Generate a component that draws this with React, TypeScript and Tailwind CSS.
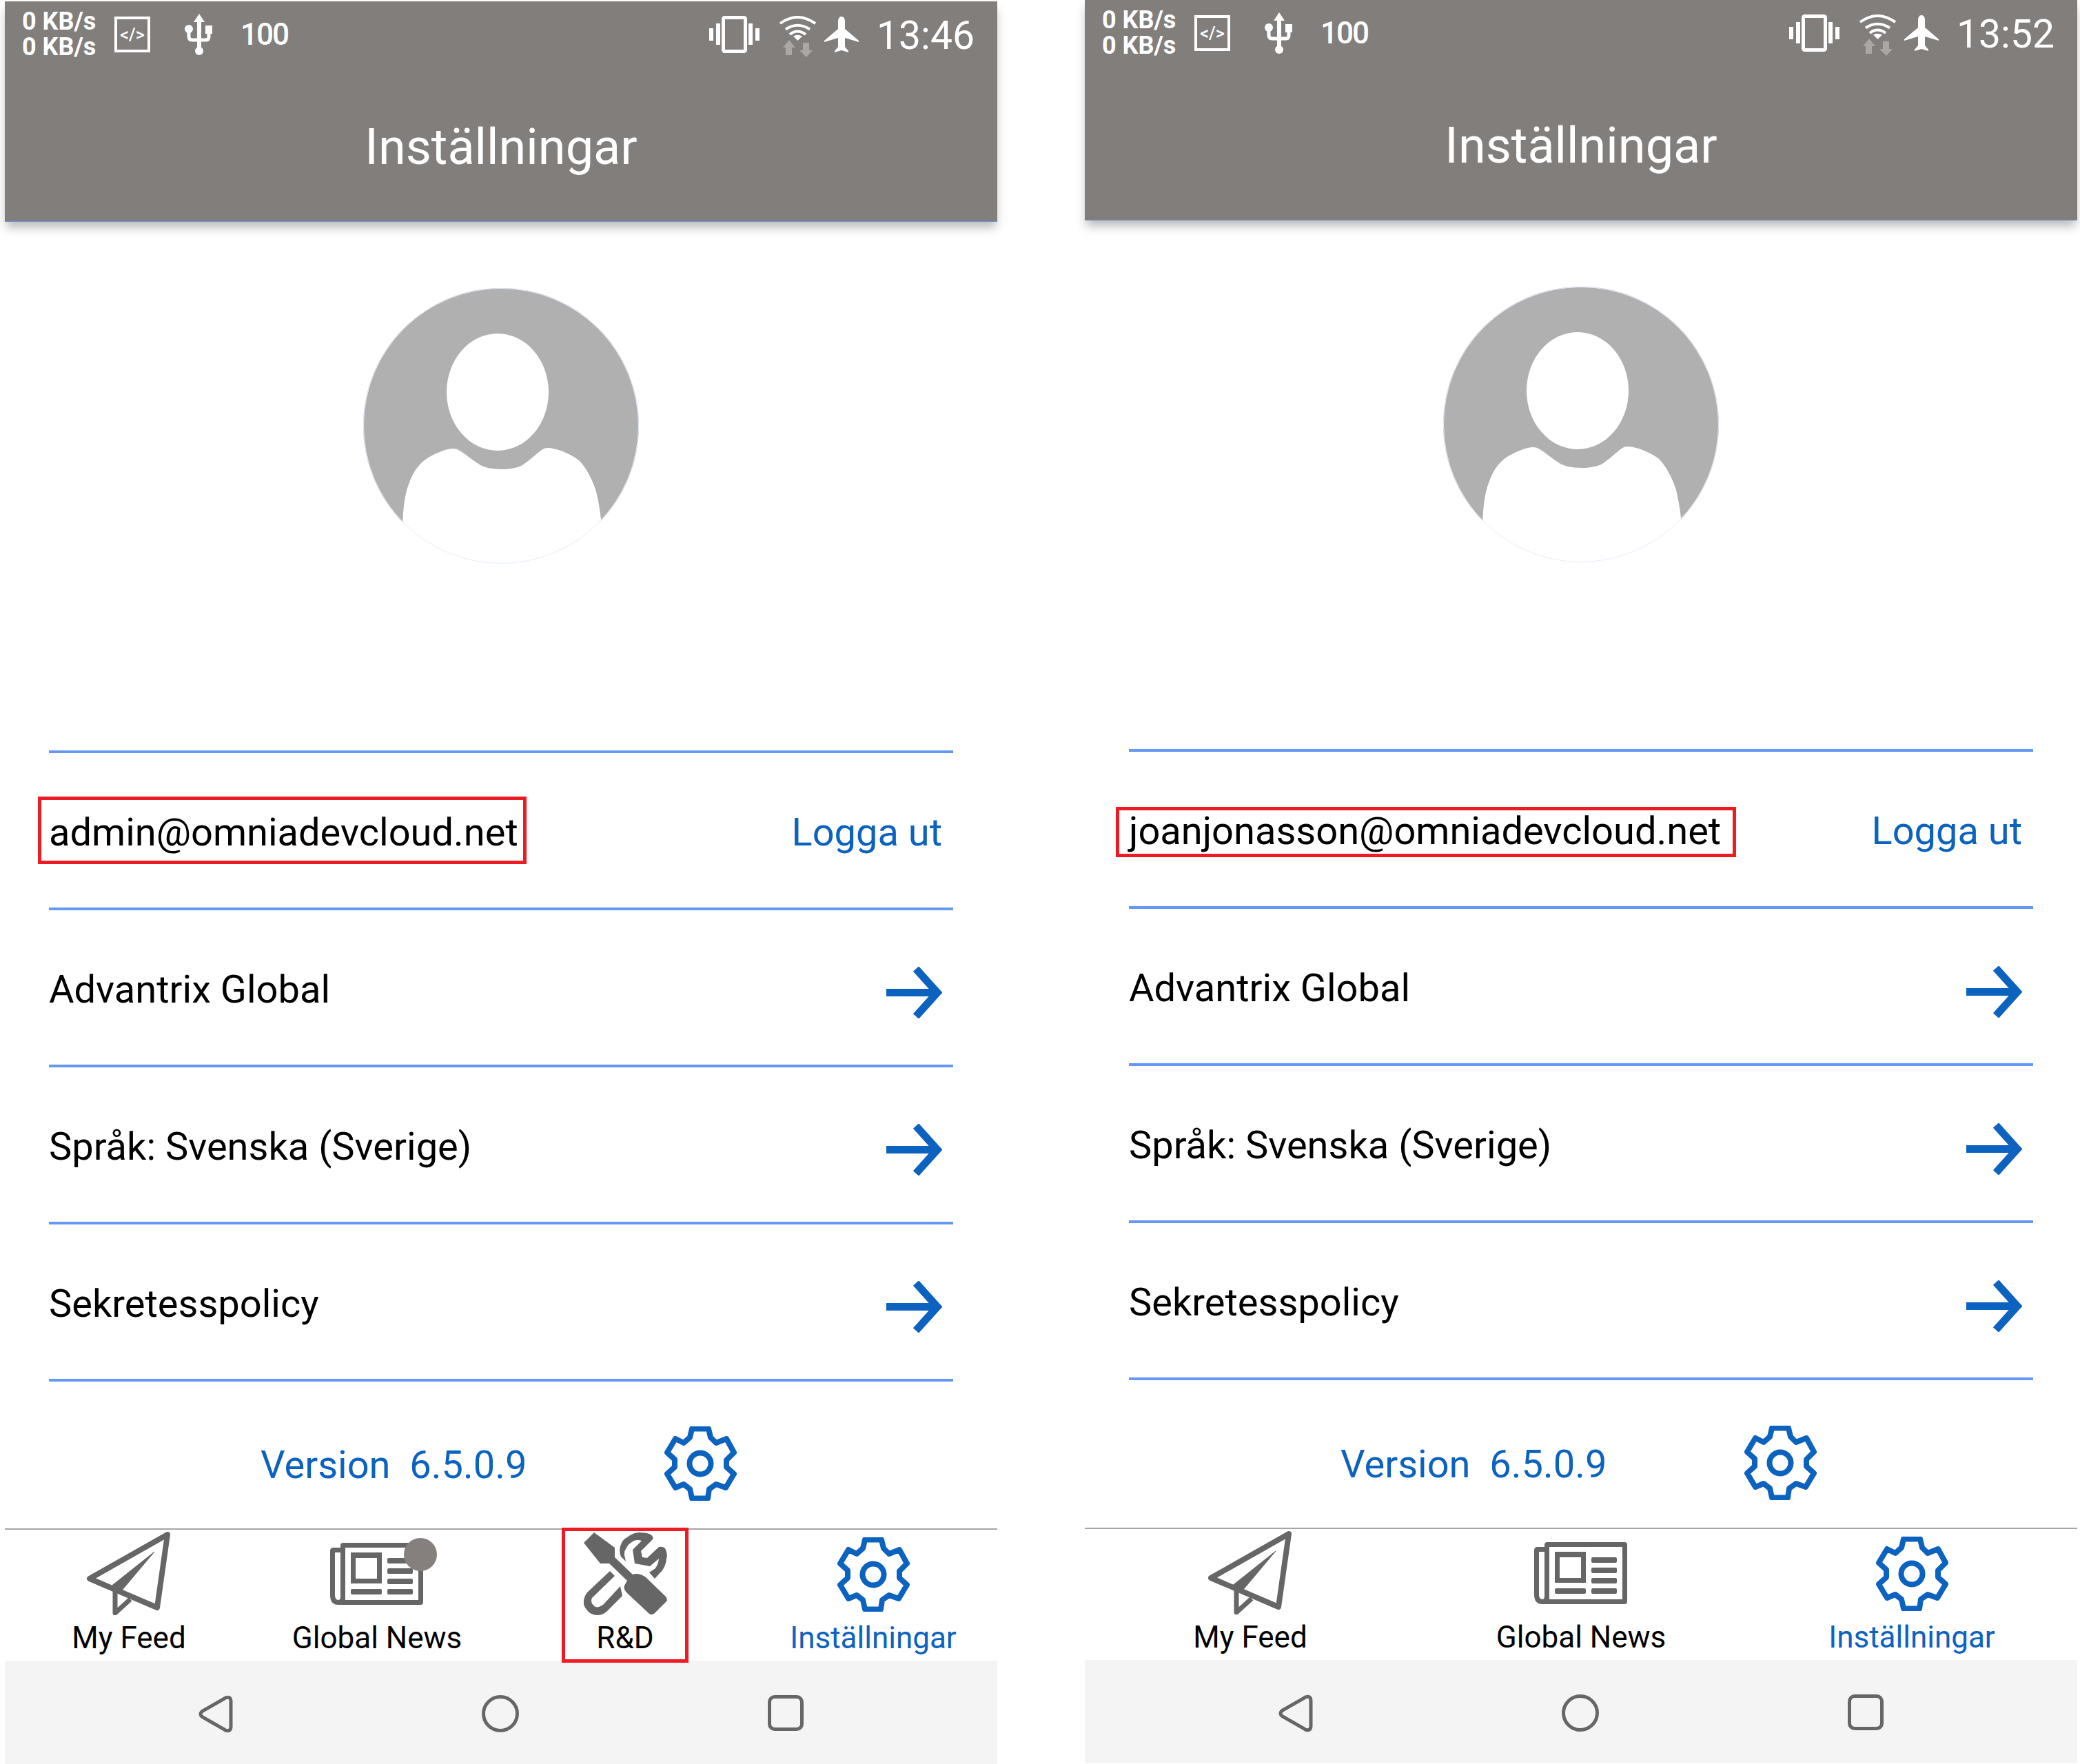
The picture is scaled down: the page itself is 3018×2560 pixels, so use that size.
const ROWS = ["Advantrix Global", "Språk: Svenska (Sverige)", "Sekretesspolicy"];

function CodeIcon() {
  return (
    <div className="flex h-[52px] w-[52px] items-center justify-center border-[4px] border-white text-[25px] font-medium leading-none text-white">
      &lt;/&gt;
    </div>
  );
}

function UsbIcon() {
  return (
    <svg width="40" height="60" viewBox="0 0 40 60" fill="white">
      <path d="M21 0l8 12H13z" />
      <rect x="18" y="10" width="6" height="44" />
      <circle cx="21" cy="54" r="6" />
      <circle cx="6" cy="22" r="6" />
      <rect x="30" y="17" width="10" height="12" />
      <path d="M6 24v9q0 5 5 5h20q4 0 4-5v-8" fill="none" stroke="white" strokeWidth="5" />
    </svg>
  );
}

function VibrateIcon() {
  return (
    <svg width="73" height="54" viewBox="0 0 73 54" fill="white">
      <rect x="20.5" y="2.5" width="32" height="49" rx="2" fill="none" stroke="white" strokeWidth="5" />
      <rect x="0" y="18" width="6" height="18" />
      <rect x="10" y="11" width="6" height="31" />
      <rect x="57" y="11" width="6" height="31" />
      <rect x="67" y="18" width="6" height="18" />
    </svg>
  );
}

function WifiIcon() {
  return (
    <svg width="57" height="60" viewBox="0 0 57 60">
      <g fill="none" stroke="white" strokeWidth="4">
        <path d="M3 11Q28 -7 54 11" />
        <path d="M11 19.5Q28 8 46 19.5" />
        <path d="M17 27Q28 18 40 27" />
      </g>
      <path d="M22 29.5Q28 26 35 29.5L28.5 36z" fill="white" />
      <path d="M16 35l9 11h-5v11h-9V46H7zM36 39h9v11h5l-9 10-10-10h5z" fill="#a9a8a7" />
    </svg>
  );
}

function PlaneIcon() {
  return (
    <svg width="50" height="52" viewBox="0 0 50 52" fill="white">
      <path d="M25 0Q30 0 30 8V18L50 35V37L30 31V44L35 50V52L25 49L15 52V50L20 44V31L0 37V35L20 18V8Q20 0 25 0Z" />
    </svg>
  );
}

function StatusBar({ time }: { time: string }) {
  return (
    <div className="flex h-[96px] items-center pl-[25px] pr-[33px] text-white">
      <div className="w-[111px] text-[36px] font-bold leading-[37px] whitespace-nowrap">
        <div>0 KB/s</div>
        <div>0 KB/s</div>
      </div>
      <div className="ml-[23px]">
        <CodeIcon />
      </div>
      <div className="ml-[50px]">
        <UsbIcon />
      </div>
      <div className="ml-[41px] text-[44px] font-medium leading-none tracking-[-2px]">100</div>
      <div className="ml-auto">
        <VibrateIcon />
      </div>
      <div className="ml-[27px] mt-[6px]">
        <WifiIcon />
      </div>
      <div className="ml-[10px]">
        <PlaneIcon />
      </div>
      <div className="ml-[26px] mt-[3px] text-[57px] leading-none">{time}</div>
    </div>
  );
}

function Avatar() {
  return (
    <svg width="400" height="400" viewBox="0 0 400 400" className="block">
      <defs>
        <clipPath id="avatar-circle">
          <circle cx="200" cy="200" r="200" />
        </clipPath>
      </defs>
      <g clipPath="url(#avatar-circle)">
        <rect width="400" height="340" fill="#b0b0b0" />
        <ellipse cx="195" cy="151" rx="74" ry="85" fill="#fff" />
        <path
          d="M57 345C58 320 60 300 66 285C73 265 82 252 100 243C112 237 122 233 131 233C140 233 150 244 170 257C182 264 215 266 231 257C248 246 258 232 267 232C280 232 300 240 313 250C325 262 333 280 338 295C342 312 344 325 346 345V420H57Z"
          fill="#fff"
        />
      </g>
      <circle cx="200" cy="200" r="199.5" fill="none" stroke="#e6eefc" strokeWidth="1" />
    </svg>
  );
}

function ArrowIcon() {
  return (
    <svg width="81" height="75" viewBox="0 0 81 75" fill="none" stroke="#0c62bf" strokeWidth="11" className="mt-[10px]">
      <path d="M0 37.5H74" />
      <path d="M43 3L74 37.5L43 72" />
    </svg>
  );
}

function GearIcon() {
  return (
    <svg width="105" height="108" viewBox="0 0 105 108" fill="none" stroke="#0c62bf" strokeWidth="8" strokeLinejoin="round">
      <path d="M40 3.500H64L67 16L75 24L90 18L101 38L90 49V59L101 69L89 89L75 84L65 91L63 104.500H40L37 91L28 84L16 89L4 69L15 59V48L4 38L16 18L28 24L37 16Z" />
      <circle cx="52" cy="54" r="15.500" />
    </svg>
  );
}

function FeedIcon() {
  return (
    <svg width="124" height="121" viewBox="0 0 124 121" fill="none" stroke="#666" strokeLinejoin="round">
      <path d="M118 4L5 68L103 110Z" strokeWidth="8" />
      <path d="M99 29L35 80L51 86Z" fill="#666" strokeWidth="1" />
      <path d="M42 86V118L64 98" strokeWidth="7" />
    </svg>
  );
}

function NewsIcon() {
  return (
    <svg width="136" height="90" viewBox="0 0 136 90" fill="#666">
      <path
        fillRule="evenodd"
        d="M15 4Q15 0 19 0H131Q135 0 135 4V86Q135 90 131 90H12Q0 90 0 76V12Q0 7 5 7H15ZM7 14V76Q7 83 12 83Q15 83 15 78V14ZM22 7V83H128V7Z"
      />
      <path fillRule="evenodd" d="M30 14H75V59H30ZM37 22V52H68V22Z" />
      <rect x="83" y="22" width="37" height="8" rx="2" />
      <rect x="83" y="37" width="37" height="8" rx="2" />
      <rect x="83" y="52" width="37" height="8" rx="2" />
      <rect x="83" y="67" width="37" height="8" rx="2" />
      <rect x="30" y="67" width="45" height="8" rx="2" />
    </svg>
  );
}

function ToolsIcon() {
  return (
    <svg width="121" height="120" viewBox="0 0 121 120" fill="#666">
      <path d="M15 0L45 22V36L71 61Q80 58 90 65L119 93Q122 98 120 100L102 118Q98 120 95 118L63 88Q57 82 59 77L63 70L37 45H24L0 15Z" />
      <path d="M54 35Q51 28 53 20Q56 10 63 7Q72 0 80 0Q90 0 95 2Q102 5 100 10L83 27L85 36L92 37L109 21Q117 20 119 25Q122 32 120 38Q119 48 114 55L103 67L95 58L104 52Q108 46 109 38L96 49L74 45L71 25L84 12Q78 10 73 12Q65 16 62 22Q58 28 59 33L61 42Z" />
      <path d="M38 56L45 63L12 95Q10 99 12 103Q16 110 22 108L28 105L53 78L56 92L33 115Q27 120 20 120Q10 120 5 113Q-2 105 0 98Q1 92 5 87Z" />
    </svg>
  );
}

function BackIcon() {
  return (
    <svg width="50" height="55" viewBox="0 0 50 55" fill="none" stroke="#666" strokeWidth="5">
      <path d="M36 6C42 1 47 3 47 9V46C47 52 42 54 36 49L6 32C2 29 2 26 6 23Z" />
    </svg>
  );
}

function Phone({
  time,
  email,
  marginClass,
  boxClass,
  tabClass,
  showRnd,
}: {
  time: string;
  email: string;
  marginClass: string;
  boxClass: string;
  tabClass: string;
  showRnd: boolean;
}) {
  return (
    <div className={`flex w-[1440px] shrink-0 flex-col ${marginClass}`}>
      <header className="h-[320px] border-b border-[#6c94d8] bg-[#827e7c] shadow-[0_10px_14px_-2px_rgba(0,0,0,0.28)]">
        <StatusBar time={time} />
        <h1 className="mt-[66px] text-center text-[72px] font-normal leading-[100px] text-white">Inställningar</h1>
      </header>

      <div className="mt-[96px] flex justify-center">
        <Avatar />
      </div>

      <div className="mx-[64px] mt-[271px] border-b-[4px] border-[#6598f5]">
        <div className="flex h-[228px] items-center justify-between border-t-[4px] border-[#6598f5] pr-[16px] pt-[6px]">
          <span className="relative inline-block text-[56px] leading-[66px] text-black">
            {email}
            <span className={`absolute border-[5px] border-[#ed1c24] ${boxClass}`} />
          </span>
          <span className="text-[56px] leading-[66px] text-[#0c62bf]">Logga ut</span>
        </div>
        {ROWS.map((row) => (
          <div
            key={row}
            className="flex h-[228px] items-center justify-between border-t-[4px] border-[#6598f5] pr-[16px] pt-[6px]"
          >
            <span className="text-[56px] leading-[66px] text-black">{row}</span>
            <ArrowIcon />
          </div>
        ))}
      </div>

      <div className="flex h-[214px] items-center pl-[371px] pt-[30px]">
        <span className="whitespace-pre text-[56px] leading-[66px] text-[#0c62bf]">Version  6.5.0.9</span>
        <div className="mb-[4px] ml-[200px]">
          <GearIcon />
        </div>
      </div>

      <nav className={`grid h-[192px] border-t-2 border-[#a5a5a5] bg-white ${tabClass}`}>
        <Tab label="My Feed">
          <FeedIcon />
        </Tab>
        <Tab label="Global News">
          <div className="relative">
            <NewsIcon />
            {showRnd && <span className="absolute left-[107px] top-[-7px] h-[48px] w-[48px] rounded-full bg-[#85807e]" />}
          </div>
        </Tab>
        {showRnd && (
          <Tab label="R&D">
            <ToolsIcon />
            <span className="absolute left-1/2 top-[-3px] h-[196px] w-[184px] -translate-x-1/2 border-[5px] border-[#ed1c24]" />
          </Tab>
        )}
        <Tab label="Inställningar" active>
          <div className="mt-[3px]">
            <GearIcon />
          </div>
        </Tab>
      </nav>

      <div className="flex h-[150px] justify-center gap-[361px] bg-[#f4f4f4] pt-[50px]">
        <BackIcon />
        <div className="h-[54px] w-[54px] rounded-full border-[5px] border-[#666]" />
        <div className="h-[52px] w-[52px] rounded-[10px] border-[5px] border-[#666]" />
      </div>
    </div>
  );
}

function Tab({ label, active, children }: { label: string; active?: boolean; children: React.ReactNode }) {
  return (
    <div className="relative flex flex-col items-center pt-[3px]">
      <div className="flex h-[121px] items-center justify-center">{children}</div>
      <span className={`mt-[7px] text-[44px] leading-[52px] ${active ? "text-[#0c62bf]" : "text-black"}`}>{label}</span>
    </div>
  );
}

export default function App() {
  return (
    <div className="flex h-[2560px] w-[3018px] gap-[127px] overflow-hidden bg-white pl-[7px] font-['Roboto',sans-serif]">
      <Phone
        time="13:46"
        email="admin@omniadevcloud.net"
        marginClass="mt-[2px]"
        boxClass="-left-[16px] -right-[12px] -top-[19px] -bottom-[13px]"
        tabClass="grid-cols-4"
        showRnd
      />
      <Phone
        time="13:52"
        email="joanjonasson@omniadevcloud.net"
        marginClass="mt-0"
        boxClass="-left-[19px] -right-[22px] -top-[2px] -bottom-[5px]"
        tabClass="grid-cols-3"
        showRnd={false}
      />
    </div>
  );
}
